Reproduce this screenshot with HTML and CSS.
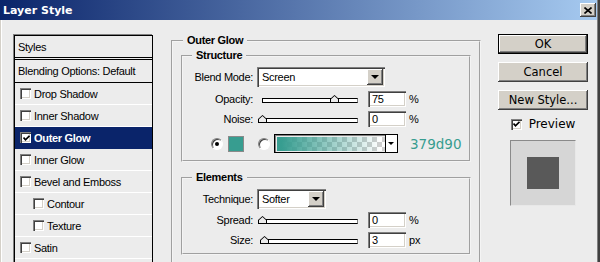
FILE: index.html
```html
<!DOCTYPE html>
<html lang="en">
<head>
    <meta charset="UTF-8">
    <meta name="viewport" content="width=device-width, initial-scale=1.0">
    <title>Layer Style</title>
    <link rel="stylesheet" href="styles.css">
</head>
<body>
    <div class="dialog">
        <div class="titlebar">
            <span class="title">Layer Style</span>
            <button class="close" aria-label="Close">
                <svg width="8" height="7" viewBox="0 0 8 7"><path d="M0.5 0.5L7.5 6.5M7.5 0.5L0.5 6.5" stroke="#000" stroke-width="1.6"/></svg>
            </button>
        </div>

        <div class="content">
            <ul class="styles">
                <li class="head">Styles</li>
                <li class="blending">Blending Options: Default</li>
                <li><span class="check"></span>Drop Shadow</li>
                <li><span class="check"></span>Inner Shadow</li>
                <li class="active"><span class="check"><svg width="7" height="7" viewBox="0 0 7 7"><path d="M0.5 2.5L2.5 4.8L6.5 0.8" fill="none" stroke="#000" stroke-width="1.7"/></svg></span>Outer Glow</li>
                <li><span class="check"></span>Inner Glow</li>
                <li><span class="check"></span>Bevel and Emboss</li>
                <li class="sub"><span class="check"></span>Contour</li>
                <li class="sub"><span class="check"></span>Texture</li>
                <li><span class="check"></span>Satin</li>
                <li></li>
            </ul>

            <fieldset class="group outer">
                <legend>Outer Glow</legend>

                <fieldset class="group">
                    <legend>Structure</legend>
                    <div class="row first">
                        <label>Blend Mode:</label>
                        <div class="select wide"><span>Screen</span><i class="drop"></i></div>
                    </div>
                    <div class="row">
                        <label>Opacity:</label>
                        <div class="slider"><div class="track"></div><i class="thumb" style="left: 73px"></i></div>
                        <div class="field">75</div>
                        <span class="unit">%</span>
                    </div>
                    <div class="row">
                        <label>Noise:</label>
                        <div class="slider"><div class="track"></div><i class="thumb" style="left: 1px"></i></div>
                        <div class="field">0</div>
                        <span class="unit">%</span>
                    </div>
                    <div class="row colors">
                        <span class="radio on"></span>
                        <span class="swatch"></span>
                        <span class="radio"></span>
                        <div class="gradient"><div class="ramp"></div><i class="drop small"></i></div>
                        <span class="hex">379d90</span>
                    </div>
                </fieldset>

                <fieldset class="group">
                    <legend>Elements</legend>
                    <div class="row first">
                        <label>Technique:</label>
                        <div class="select narrow"><span>Softer</span><i class="drop"></i></div>
                    </div>
                    <div class="row tight">
                        <label>Spread:</label>
                        <div class="slider"><div class="track"></div><i class="thumb" style="left: 1px"></i></div>
                        <div class="field">0</div>
                        <span class="unit">%</span>
                    </div>
                    <div class="row">
                        <label>Size:</label>
                        <div class="slider"><div class="track"></div><i class="thumb" style="left: 3px"></i></div>
                        <div class="field">3</div>
                        <span class="unit">px</span>
                    </div>
                </fieldset>
            </fieldset>

            <div class="actions">
                <button class="btn default">OK</button>
                <button class="btn">Cancel</button>
                <button class="btn">New Style...</button>
                <label class="preview-check"><span class="check"><svg width="7" height="7" viewBox="0 0 7 7"><path d="M0.5 2.5L2.5 4.8L6.5 0.8" fill="none" stroke="#000" stroke-width="1.7"/></svg></span>Preview</label>
                <div class="preview"><div class="sample"></div></div>
            </div>
        </div>
    </div>
</body>
</html>
```

FILE: styles.css
```css
body {
    margin: 0;
    width: 600px;
    height: 262px;
    overflow: hidden;
    font-family: "Liberation Sans", Arial, sans-serif;
    font-size: 11px;
    letter-spacing: -0.3px;
    color: #000;
    background-color: #ececec;
}

.dialog {
    height: 262px;
    border-right: 2px solid #404040;
}

.titlebar {
    height: 20px;
    display: flex;
    align-items: center;
    justify-content: space-between;
    padding: 0 1px 0 3px;
    border-right: 1px solid #808080;
    background: linear-gradient(to right, #0a246a, #a6caf0);
    color: #fff;
    font-family: "DejaVu Sans", sans-serif;
    font-weight: bold;
    letter-spacing: 0;
}

.close {
    width: 16px;
    height: 14px;
    padding: 0;
    border: none;
    display: flex;
    align-items: center;
    justify-content: center;
    background-color: #d4d0c8;
    box-shadow: inset -1px -1px #404040, inset 1px 1px #fff, inset -2px -2px #808080;
}

.content {
    display: flex;
    align-items: flex-start;
    height: 242px;
    padding: 14px 8px 0 13px;
    border-left: 1px solid #d4d0c8;
    border-right: 1px solid #808080;
    box-shadow: inset 1px 0 #fff;
}

/* style list */

.styles {
    list-style: none;
    margin: 1px 0 0;
    padding: 0;
    width: 139px;
    height: 240px;
    flex: none;
    box-sizing: border-box;
    border: 1px solid #000;
    box-shadow: -1px -1px #808080;
}

.styles li {
    height: 21px;
    display: flex;
    align-items: center;
    padding-left: 5px;
    border-bottom: 1px solid #fff;
}

.styles .head {
    height: 21px;
    padding-left: 3px;
    border-bottom: 1px solid #000;
    margin-bottom: 1px;
}

.styles .blending {
    height: 22px;
    padding-left: 3px;
    border-top: 1px solid #000;
    border-bottom: 1px solid #000;
}

.styles .sub {
    padding-left: 18px;
}

.styles .active {
    background-color: #0a246a;
    border-bottom-color: #0a246a;
    color: #fff;
    font-weight: bold;
}

.check {
    width: 11px;
    height: 11px;
    box-sizing: border-box;
    margin-right: 3px;
    display: flex;
    align-items: center;
    justify-content: center;
    background-color: #fff;
    box-shadow: inset 1px 1px #808080, inset 2px 2px #404040, inset -1px -1px #fff, inset -2px -2px #d4d0c8;
}

.check svg {
    margin: 1px 0 0 1px;
}

/* group boxes */

.group {
    margin: 0;
    padding: 0;
    min-width: 0;
    border: 2px groove #f4f4f4;
}

.group legend {
    margin-left: 9px;
    padding: 0 4px;
    line-height: 13px;
    font-weight: bold;
}

.outer {
    width: 310px;
    height: 240px;
    flex: none;
    box-sizing: border-box;
    margin-left: 18px;
    padding: 2px 8px 0;
}

.outer > legend {
    margin-left: 2px;
}

.outer > .group {
    padding-bottom: 7px;
}

.outer > .group + .group {
    margin-top: 9px;
    padding-bottom: 5px;
}

.row {
    display: flex;
    align-items: center;
    height: 16px;
    margin-top: 4px;
}

.row.first {
    height: 20px;
    margin-top: 5px;
}

.row.tight {
    margin-top: 3px;
}

.row label {
    width: 70px;
    margin-right: 4px;
    text-align: right;
}

.select {
    height: 20px;
    box-sizing: border-box;
    display: flex;
    align-items: center;
    justify-content: space-between;
    padding: 2px 2px 2px 5px;
    background-color: #fff;
    box-shadow: inset 1px 1px #808080, inset 2px 2px #404040, inset -1px -1px #fff, inset -2px -2px #d4d0c8;
}

.select.wide {
    width: 128px;
}

.select.narrow {
    width: 69px;
}

.drop {
    width: 16px;
    height: 16px;
    position: relative;
    background-color: #d4d0c8;
    box-shadow: inset -1px -1px #404040, inset 1px 1px #fff, inset -2px -2px #808080;
}

.drop::after {
    content: "";
    position: absolute;
    left: 4px;
    top: 6px;
    border: 4px solid transparent;
    border-top: 4px solid #000;
    border-bottom: none;
}

.slider {
    position: relative;
    width: 106px;
    height: 16px;
}

.track {
    margin: 7px 5px 0;
    height: 5px;
    box-sizing: border-box;
    border: 1px solid #000;
    border-right-color: #808080;
    background-color: #fff;
}

.thumb {
    position: absolute;
    top: 4px;
    width: 9px;
    height: 8px;
    background: #000;
    clip-path: polygon(50% 0, 100% 50%, 100% 100%, 0 100%, 0 50%);
}

.thumb::after {
    content: "";
    position: absolute;
    left: 1px;
    top: 1px;
    width: 7px;
    height: 6px;
    background-color: #ececec;
    clip-path: polygon(50% 0, 100% 55%, 100% 100%, 0 100%, 0 55%);
}

.field {
    width: 38px;
    height: 16px;
    box-sizing: border-box;
    margin-left: 5px;
    padding: 2px 4px 0;
    line-height: 13px;
    background-color: #fff;
    box-shadow: inset 1px 1px #808080, inset 2px 2px #404040, inset -1px -1px #fff, inset -2px -2px #d4d0c8;
}

.unit {
    margin-left: 3px;
    letter-spacing: 0;
}

.colors {
    height: 19px;
    margin-top: 7px;
    padding-left: 28px;
}

.radio {
    width: 12px;
    height: 12px;
    box-sizing: border-box;
    position: relative;
    border-radius: 50%;
    border: 1px solid;
    border-color: #808080 #fff #fff #808080;
    background-color: #fff;
    box-shadow: inset 1px 1px #404040;
}

.radio.on::after {
    content: "";
    position: absolute;
    left: 3px;
    top: 3px;
    width: 4px;
    height: 4px;
    border-radius: 50%;
    background-color: #000;
}

.swatch {
    width: 16px;
    height: 16px;
    box-sizing: border-box;
    margin: 0 14px 0 5px;
    border: 1px solid #8a8a8a;
    background-color: #379d90;
}

.gradient {
    width: 124px;
    height: 19px;
    box-sizing: border-box;
    margin-left: 4px;
    display: flex;
    border: 1px solid #000;
    box-shadow: inset 1px 1px #808080;
}

.ramp {
    flex: 1;
    margin: 2px 0 1px 2px;
    background:
        linear-gradient(to right, #379d90 4%, rgba(55, 157, 144, 0) 96%),
        repeating-conic-gradient(#cfcfcf 0 25%, #fff 0 50%) 0 0 / 10px 10px;
}

.drop.small {
    width: 11px;
    height: auto;
    background-color: #fff;
    border-left: 1px solid #000;
    box-shadow: none;
}

.drop.small::after {
    left: 2px;
    top: 7px;
    border-width: 3px;
    border-top-width: 3px;
}

.hex {
    margin-left: 12px;
    font-family: "DejaVu Sans", sans-serif;
    font-size: 13.5px;
    letter-spacing: 0;
    color: #379d90;
}

/* buttons and preview */

.actions {
    width: 90px;
    flex: none;
    margin-left: 17px;
    display: flex;
    flex-direction: column;
    align-items: center;
}

.btn {
    width: 90px;
    height: 20px;
    margin-bottom: 8px;
    padding: 0;
    border: none;
    font-family: "DejaVu Sans", sans-serif;
    font-size: 11.5px;
    color: #000;
    background-color: #d4d0c8;
    box-shadow: inset -1px -1px #404040, inset 1px 1px #fff, inset -2px -2px #808080;
}

.btn.default {
    box-shadow: inset 0 0 0 1px #000, inset -2px -2px #404040, inset 2px 2px #fff, inset -3px -3px #808080;
}

.preview-check {
    display: flex;
    align-items: center;
    margin-top: -1px;
    font-family: "DejaVu Sans", sans-serif;
    font-size: 12px;
    letter-spacing: 0;
}

.preview-check .check {
    margin-right: 7px;
}

.preview {
    width: 66px;
    height: 66px;
    box-sizing: border-box;
    margin-top: 9px;
    display: flex;
    align-items: center;
    justify-content: center;
    border: 1px solid;
    border-color: #8a8a8a #e8e8e8 #e8e8e8 #8a8a8a;
    background-color: #d6d6d6;
}

.sample {
    width: 32px;
    height: 32px;
    background-color: #595959;
}
```
